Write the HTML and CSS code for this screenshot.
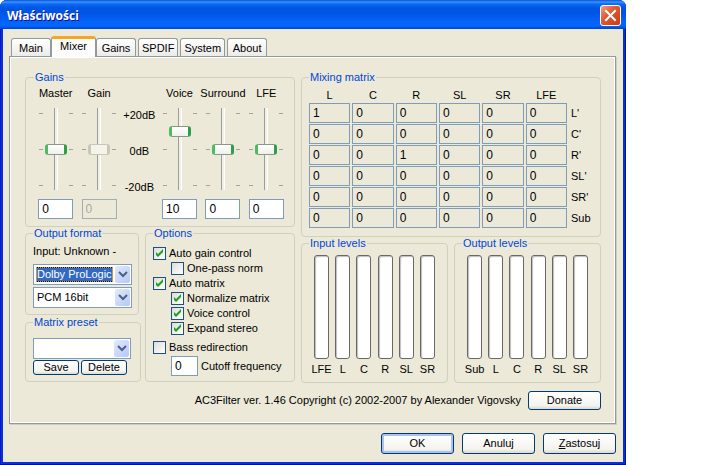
FILE: index.html
```html
<!DOCTYPE html>
<html lang="pl">
<head>
  <meta charset="UTF-8" />
  <meta name="viewport" content="width=device-width, initial-scale=1.0"/>
  <title>Właściwości</title>
  <link rel="stylesheet" href="styles.css">
</head>
<body>
  <main class="window">
    <header class="titlebar">
      <h1>Właściwości</h1>
      <button class="close-btn" type="button" aria-label="Zamknij">
        <svg width="19" height="19" viewBox="0 0 19 19"><path d="M5 5l9 9M14 5l-9 9" stroke="#fff" stroke-width="2" stroke-linecap="square"/></svg>
      </button>
    </header>

    <div class="content">
      <nav class="tabs">
        <button type="button" class="tab">Main</button>
        <button type="button" class="tab active">Mixer</button>
        <button type="button" class="tab">Gains</button>
        <button type="button" class="tab">SPDIF</button>
        <button type="button" class="tab">System</button>
        <button type="button" class="tab">About</button>
      </nav>

      <section class="pane">
        <div class="columns">
          <div class="left">
            <fieldset class="gains">
              <legend>Gains</legend>
              <div class="gain-row">
                <div class="gain">
                  <label for="master">Master</label>
                  <div class="scale"><input type="range" id="master" min="-20" max="20" value="0"></div>
                  <input type="text" class="box" value="0" aria-label="Master dB">
                </div>
                <div class="gain">
                  <label for="gain">Gain</label>
                  <div class="scale"><input type="range" id="gain" min="-20" max="20" value="0" disabled></div>
                  <input type="text" class="box" value="0" aria-label="Gain dB" disabled>
                </div>
                <div class="db">
                  <span>+20dB</span>
                  <span>0dB</span>
                  <span>-20dB</span>
                </div>
                <div class="gain">
                  <label for="voice">Voice</label>
                  <div class="scale"><input type="range" id="voice" min="-20" max="20" value="10"></div>
                  <input type="text" class="box" value="10" aria-label="Voice dB">
                </div>
                <div class="gain">
                  <label for="surround">Surround</label>
                  <div class="scale"><input type="range" id="surround" min="-20" max="20" value="0"></div>
                  <input type="text" class="box" value="0" aria-label="Surround dB">
                </div>
                <div class="gain">
                  <label for="lfe">LFE</label>
                  <div class="scale"><input type="range" id="lfe" min="-20" max="20" value="0"></div>
                  <input type="text" class="box" value="0" aria-label="LFE dB">
                </div>
              </div>
            </fieldset>

            <div class="lower">
              <div class="format-col">
                <fieldset class="format">
                  <legend>Output format</legend>
                  <p>Input: Unknown -</p>
                  <div class="combo">
                    <select class="selected" aria-label="Output format"><option>Dolby ProLogic</option></select>
                    <svg class="arrow" viewBox="0 0 15 17"><path d="M4 6l4 4 4-4" fill="none" stroke="#4d6185" stroke-width="2"/></svg>
                  </div>
                  <div class="combo">
                    <select aria-label="Sample format"><option>PCM 16bit</option></select>
                    <svg class="arrow" viewBox="0 0 15 17"><path d="M4 6l4 4 4-4" fill="none" stroke="#4d6185" stroke-width="2"/></svg>
                  </div>
                </fieldset>
                <fieldset class="preset">
                  <legend>Matrix preset</legend>
                  <div class="combo">
                    <select aria-label="Matrix preset"><option></option></select>
                    <svg class="arrow" viewBox="0 0 15 17"><path d="M4 6l4 4 4-4" fill="none" stroke="#4d6185" stroke-width="2"/></svg>
                  </div>
                  <div class="preset-btns">
                    <button type="button" class="btn small">Save</button>
                    <button type="button" class="btn small">Delete</button>
                  </div>
                </fieldset>
              </div>

              <fieldset class="options">
                <legend>Options</legend>
                <label class="check"><input type="checkbox" checked>Auto gain control</label>
                <label class="check sub"><input type="checkbox">One-pass norm</label>
                <label class="check"><input type="checkbox" checked>Auto matrix</label>
                <label class="check sub"><input type="checkbox" checked>Normalize matrix</label>
                <label class="check sub"><input type="checkbox" checked>Voice control</label>
                <label class="check sub"><input type="checkbox" checked>Expand stereo</label>
                <label class="check bass"><input type="checkbox">Bass redirection</label>
                <div class="cutoff sub">
                  <input type="text" class="box" id="cutoff" value="0">
                  <label for="cutoff">Cutoff frequency</label>
                </div>
              </fieldset>
            </div>
          </div>

          <div class="right">
            <fieldset class="mixing">
              <legend>Mixing matrix</legend>
              <table>
                <thead>
                  <tr><th>L</th><th>C</th><th>R</th><th>SL</th><th>SR</th><th>LFE</th><td class="row-name"></td></tr>
                </thead>
                <tbody id="matrix"></tbody>
              </table>
            </fieldset>

            <div class="levels">
              <fieldset>
                <legend>Input levels</legend>
                <div class="meters">
                  <div class="meter"><i></i><span>LFE</span></div>
                  <div class="meter"><i></i><span>L</span></div>
                  <div class="meter"><i></i><span>C</span></div>
                  <div class="meter"><i></i><span>R</span></div>
                  <div class="meter"><i></i><span>SL</span></div>
                  <div class="meter"><i></i><span>SR</span></div>
                </div>
              </fieldset>
              <fieldset>
                <legend>Output levels</legend>
                <div class="meters">
                  <div class="meter"><i></i><span>Sub</span></div>
                  <div class="meter"><i></i><span>L</span></div>
                  <div class="meter"><i></i><span>C</span></div>
                  <div class="meter"><i></i><span>R</span></div>
                  <div class="meter"><i></i><span>SL</span></div>
                  <div class="meter"><i></i><span>SR</span></div>
                </div>
              </fieldset>
            </div>
          </div>
        </div>

        <div class="about">
          <span>AC3Filter ver. 1.46 Copyright (c) 2002-2007 by Alexander Vigovsky</span>
          <button type="button" class="btn donate">Donate</button>
        </div>
      </section>

      <footer class="actions">
        <button type="button" class="btn default">OK</button>
        <button type="button" class="btn">Anuluj</button>
        <button type="button" class="btn"><u>Z</u>astosuj</button>
      </footer>
    </div>
  </main>

  <script>
    const inputs = ["L", "C", "R", "SL", "SR", "LFE"];
    const outputs = ["L'", "C'", "R'", "SL'", "SR'", "Sub"];
    const tbody = document.getElementById("matrix");

    // L and R are passed straight through, all other gains are zero
    outputs.forEach((out, i) => {
      let row = "<tr>";
      inputs.forEach((inp, j) => {
        const value = i === j && (i === 0 || i === 2) ? 1 : 0;
        row += `<td><input type="text" class="box" readonly value="${value}" aria-label="${inp} - ${out}"></td>`;
      });
      tbody.innerHTML += row + `<th class="row-name">${out}</th></tr>`;
    });
  </script>
</body>
</html>
```
FILE: styles.css
```css
* {
  box-sizing: border-box;
}
body {
  margin: 0;
  background: #fff;
  color: #000;
  font: 11px/13px "Liberation Sans", Arial, sans-serif;
}
button, input, select {
  font: inherit;
  color: inherit;
  margin: 0;
}
.window {
  max-width: 626px;
  background: #0831d9;
  border-radius: 7px 7px 0 0;
  padding: 0 3px 3px;
  box-shadow: inset -1px -1px #00138c, inset 1px 0 #0019cf;
}
.titlebar {
  display: flex;
  align-items: center;
  justify-content: space-between;
  height: 29px;
  margin: 0 -3px;
  padding: 2px 5px 0 7px;
  border-radius: 7px 7px 0 0;
  background: linear-gradient(#0a50d8 0, #3c93ff 2px, #0a6af5 4px, #0054e3 8px, #0055e5 14px, #0464fb 22px, #0366ff 26px, #0040c8 29px);
}
.titlebar h1 {
  margin: 0;
  color: #fff;
  font: bold 12px/16px "Open Sans", "Noto Sans", sans-serif;
  text-shadow: 1px 1px #0f1089;
}
.close-btn {
  width: 21px;
  height: 21px;
  padding: 0;
  border: 1px solid #fff;
  border-radius: 3px;
  background: linear-gradient(135deg, #f0a088, #e25a35 40%, #c83a12);
}
.close-btn svg {
  display: block;
}
.content {
  background: #ece9d8;
  padding: 7px 7px 8px 6px;
}

/* tabs */
.tabs {
  display: flex;
  align-items: flex-end;
  padding-left: 2px;
  gap: 2px;
}
.tab {
  min-width: 40px;
  height: 18px;
  padding: 1px 3px 0;
  border: 1px solid #919b9c;
  border-bottom: none;
  border-radius: 3px 3px 0 0;
  background: linear-gradient(#fff, #ecebe6);
}
.tab.active {
  min-width: 45px;
  height: 21px;
  margin: 0 -2px -1px;
  padding: 0 3px 3px;
  border-top: 3px solid #f5a623;
  background: #fcfcfa;
  z-index: 1;
}
.pane {
  border: 1px solid #919b9c;
  box-shadow: inset 1px 1px #fff, inset -1px -1px #fff, 1px 1px #d0ceba;
  padding: 14px 14px 13px 15px;
}

/* groups */
fieldset {
  min-width: 0;
  margin: 0;
  padding: 0 7px;
  border: 1px solid #d0d0bf;
  border-radius: 4px;
}
legend {
  padding: 0 1px;
  color: #0046d5;
}
.columns {
  display: grid;
  grid-template-columns: 270fr 300fr;
  gap: 6px;
}
.left, .right {
  display: flex;
  flex-direction: column;
}
.box {
  width: 35px;
  height: 20px;
  padding: 0 3px;
  border: 1px solid #7f9db9;
  background: #fff;
  font-size: 12px;
}
.box:disabled {
  border-color: #a5acb2;
  background: #ece9d8;
  color: #aca899;
}

/* gain sliders */
.gains {
  padding: 2px 6px 7px 8px;
}
.gain-row {
  display: flex;
}
.gain {
  flex: 1 1 0;
  min-width: 0;
  display: flex;
  flex-direction: column;
  align-items: center;
}
.gain label {
  height: 22px;
  padding-top: 1px;
  white-space: nowrap;
}
.scale {
  width: 34px;
  height: 82px;
  margin-bottom: 9px;
  padding: 0 6px;
  background:
    linear-gradient(#a5a394, #a5a394) 0 5px / 4px 1px,
    linear-gradient(#a5a394, #a5a394) 100% 5px / 4px 1px,
    linear-gradient(#a5a394, #a5a394) 0 41px / 4px 1px,
    linear-gradient(#a5a394, #a5a394) 100% 41px / 4px 1px,
    linear-gradient(#a5a394, #a5a394) 0 77px / 4px 1px,
    linear-gradient(#a5a394, #a5a394) 100% 77px / 4px 1px;
  background-repeat: no-repeat;
}
.scale input {
  display: block;
  appearance: none;
  writing-mode: vertical-lr;
  direction: rtl;
  width: 22px;
  height: 82px;
  background: linear-gradient(90deg, #9d9c99 0 1px, #f0efe8 1px 3px, #fff 3px) center / 4px 100% no-repeat;
}
.scale input::-webkit-slider-thumb {
  appearance: none;
  width: 22px;
  height: 11px;
  border: 1px solid #8a988a;
  border-left: 3px solid #4dbb62;
  border-right: 3px solid #2f9e48;
  border-radius: 3px;
  background: linear-gradient(#fff, #f0f0ea);
}
.scale input:disabled::-webkit-slider-thumb {
  border-color: #c9c7ba;
  background: #f5f4ea;
}
.db {
  width: 37px;
  display: flex;
  flex-direction: column;
  gap: 23px;
  padding-top: 23px;
  align-items: center;
}

/* output format, preset and options */
.lower {
  display: grid;
  grid-template-columns: 116fr 150fr;
  gap: 4px;
}
.format-col {
  min-width: 0;
  display: flex;
  flex-direction: column;
  gap: 1px;
}
.format {
  margin-right: 2px;
  padding: 0 6px 6px 7px;
}
.format p {
  margin: 5px 0 6px;
  white-space: nowrap;
}
.combo {
  position: relative;
  margin-bottom: 2px;
}
.combo:last-child {
  margin-bottom: 0;
}
.combo select {
  display: block;
  appearance: none;
  width: 100%;
  height: 21px;
  padding: 0 18px 0 3px;
  border: 1px solid #7f9db9;
  border-radius: 0;
  background: #fff;
}
.combo select.selected {
  color: #fff;
  background:
    linear-gradient(#316ac5, #316ac5) 3px 3px / calc(100% - 22px) 13px no-repeat,
    repeating-linear-gradient(90deg, #ce953a 0 1px, #111 1px 2px) 2px 2px / calc(100% - 20px) 15px no-repeat,
    #fff;
}
.arrow {
  position: absolute;
  top: 2px;
  right: 2px;
  width: 15px;
  height: 17px;
  border-radius: 2px;
  background: linear-gradient(135deg, #e1eafe, #b5c8f5);
  pointer-events: none;
}
.preset {
  padding: 9px 9px 6px 7px;
}
.preset .combo {
  margin-bottom: 1px;
}
.preset-btns {
  display: flex;
  gap: 2px;
}
.options {
  padding-top: 6px;
}
.check {
  display: flex;
  align-items: center;
  gap: 3px;
  height: 15px;
  white-space: nowrap;
}
.sub {
  margin-left: 18px;
}
.bass {
  margin-top: 4px;
}
.check input {
  appearance: none;
  width: 13px;
  height: 13px;
  border: 1px solid #1c5180;
  background: linear-gradient(135deg, #dcdcd7, #fff);
}
.check input:checked::before {
  content: "";
  display: block;
  width: 11px;
  height: 11px;
  background: #21a121;
  clip-path: polygon(2px 4px, 4px 6px, 9px 1px, 9px 4px, 4px 9px, 2px 7px);
}
.cutoff {
  display: flex;
  align-items: center;
  gap: 3px;
  margin-top: 1px;
  white-space: nowrap;
}
.cutoff .box {
  width: 27px;
}

/* mixing matrix */
.mixing {
  padding: 5px 0 7px 7px;
}
table {
  width: 100%;
  table-layout: fixed;
  border-collapse: collapse;
}
th, td {
  padding: 0 2px 1px 0;
  font-weight: normal;
}
thead th {
  height: 14px;
}
td .box {
  display: block;
  width: 100%;
  background: #ece9d8;
}
.row-name {
  width: 31px;
  padding-left: 2px;
  text-align: left;
}

/* level meters */
.levels {
  display: grid;
  grid-template-columns: 1fr 1fr;
  gap: 6px;
}
.levels fieldset {
  padding: 5px 9px 6px;
}
.levels legend {
  margin-left: -2px;
}
.meters {
  display: flex;
}
.meter {
  flex: 1 1 0;
  min-width: 0;
  display: flex;
  flex-direction: column;
  align-items: center;
  gap: 4px;
}
.meter i {
  width: 15px;
  height: 104px;
  border: 1px solid #686868;
  border-radius: 3px;
  background: #fff;
  box-shadow: inset 1px 1px 1px #bebebe;
}

/* buttons */
.btn {
  width: 73px;
  height: 21px;
  padding: 0;
  border: 1px solid #003c74;
  border-radius: 3px;
  background: linear-gradient(#fff, #f4f3ee 80%, #dcd8cc);
}
.btn.small {
  width: 46px;
  height: 15px;
}
.btn.default {
  box-shadow: inset 0 0 0 2px #a9c3ee;
}
.btn.donate {
  height: 19px;
}
.about {
  display: flex;
  justify-content: flex-end;
  align-items: center;
  gap: 7px;
  margin-top: 8px;
}
.actions {
  display: flex;
  justify-content: flex-end;
  gap: 8px;
  margin-top: 9px;
}
```
